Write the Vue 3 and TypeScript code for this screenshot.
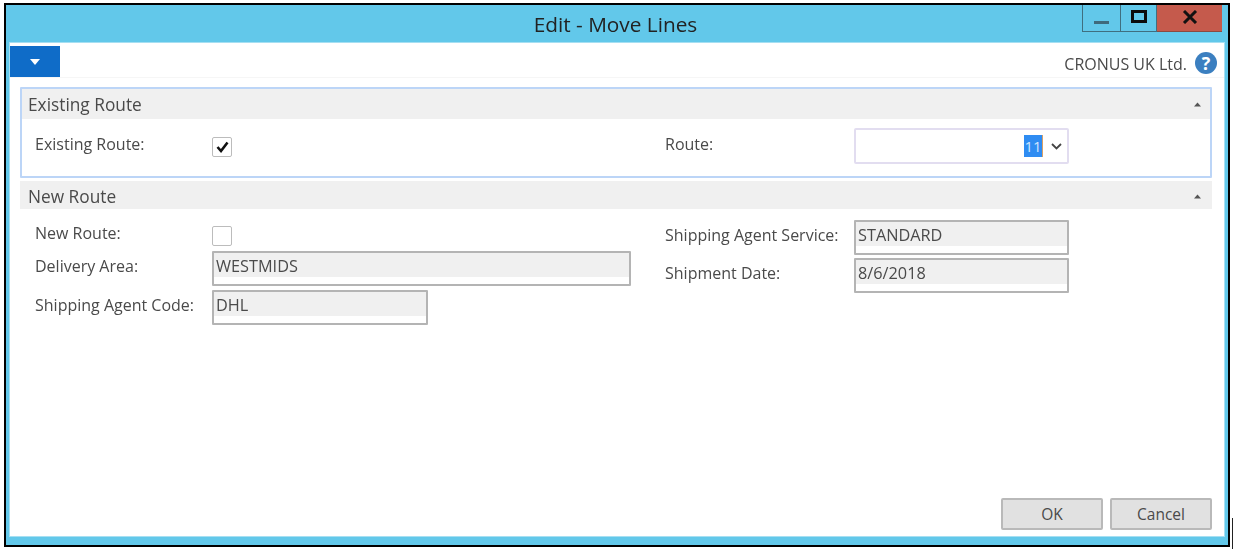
<template>
  <div class="page">
    <div class="window">
      <header class="titlebar">
        <span class="title">Edit - Move Lines</span>
        <div class="caption">
          <button class="cap cap-min" type="button"><span class="min-bar"></span></button>
          <button class="cap cap-max" type="button"><span class="max-box"></span></button>
          <button class="cap cap-close" type="button">
            <svg width="16" height="14" viewBox="0 0 16 14">
              <path d="M2 1l12 12M14 1L2 13" fill="none" stroke="#111" stroke-width="3" />
            </svg>
          </button>
        </div>
      </header>

      <div class="content">
        <div class="toolbar">
          <button class="menu-btn" type="button">
            <svg width="10" height="6" viewBox="0 0 10 6"><path d="M0 0h10L5 6z" fill="#fff" /></svg>
          </button>
          <div class="company">
            <span class="company-name">CRONUS UK Ltd.</span>
            <span class="help">?</span>
          </div>
        </div>

        <section class="panel panel-active">
          <div class="panel-head">
            <span>Existing Route</span>
            <svg class="collapse" width="7" height="5" viewBox="0 0 7 5"><path d="M0 4.500L3.500 0.500L7 4.500z" fill="#555" /></svg>
          </div>
          <div class="panel-body body-existing">
            <div class="row">
              <label>Existing Route:</label>
              <span class="check check-on">
                <svg width="13" height="12" viewBox="0 0 13 12">
                  <path d="M1.500 6L5 10l6.500-8.500" fill="none" stroke="#111" stroke-width="2.600" />
                </svg>
              </span>
            </div>
            <div class="row row-right">
              <label>Route:</label>
              <div class="route-input">
                <span class="sel">11</span>
                <svg class="chev" width="11" height="7" viewBox="0 0 11 7">
                  <path d="M1 1l4.500 4.500L10 1" fill="none" stroke="#444" stroke-width="1.800" />
                </svg>
              </div>
            </div>
          </div>
        </section>

        <section class="panel panel-new">
          <div class="panel-head">
            <span>New Route</span>
            <svg class="collapse" width="7" height="5" viewBox="0 0 7 5"><path d="M0 4.500L3.500 0.500L7 4.500z" fill="#555" /></svg>
          </div>
          <div class="panel-body body-new">
            <div class="col">
              <div class="row row-new">
                <label>New Route:</label>
                <span class="check"></span>
              </div>
              <div class="row row-field">
                <label>Delivery Area:</label>
                <div class="field field-wide"><span class="val">WESTMIDS</span></div>
              </div>
              <div class="row row-field">
                <label>Shipping Agent Code:</label>
                <div class="field field-short"><span class="val">DHL</span></div>
              </div>
            </div>
            <div class="col col-right">
              <div class="row row-field row-right">
                <label>Shipping Agent Service:</label>
                <div class="field field-right"><span class="val">STANDARD</span></div>
              </div>
              <div class="row row-field row-right">
                <label>Shipment Date:</label>
                <div class="field field-right"><span class="val">8/6/2018</span></div>
              </div>
            </div>
          </div>
        </section>

        <footer class="actions">
          <button class="btn btn-ok" type="button">OK</button>
          <button class="btn" type="button">Cancel</button>
        </footer>
      </div>
    </div>
    <i class="stray-line"></i>
  </div>
</template>

<script setup lang="ts">
</script>

<style>
html,
body {
  margin: 0;
  background: #fff;
}
</style>

<style scoped>
.page {
  position: relative;
  width: 1233px;
  height: 549px;
  padding: 3px 0 0 4px;
  box-sizing: border-box;
  overflow: hidden;
  font-family: "Open Sans", "Noto Sans", "Liberation Sans", sans-serif;
  color: #4a4a4a;
}

.window {
  width: 1226px;
  height: 544px;
  box-sizing: border-box;
  border: 2px solid #000;
  background: #62c8ea;
  padding: 0 4px 9px 4px;
  display: flex;
  flex-direction: column;
}

.titlebar {
  position: relative;
  height: 38px;
  flex: none;
  display: flex;
  align-items: center;
  justify-content: center;
}

.title {
  font-size: 20.800px;
  color: #222;
  margin-right: 3px;
  filter: blur(0.4px);
}

.caption {
  position: absolute;
  top: 0;
  right: 2px;
  display: flex;
  height: 27px;
}

.cap {
  margin: 0;
  padding: 0;
  border: 1px solid #3f6f80;
  border-top: none;
  background: #62c8ea;
  display: flex;
  align-items: center;
  justify-content: center;
}

.cap-min {
  width: 39px;
}

.cap-max {
  width: 36px;
  border-left: none;
}

.cap-close {
  width: 65px;
  background: #c55a4c;
  border: none;
  border-bottom: 1px solid #8c4a40;
}

.cap-close svg {
  margin-bottom: 3px;
}

.min-bar {
  width: 15px;
  height: 3px;
  background: #3f6a7c;
  margin-top: 9px;
}

.max-box {
  width: 10px;
  height: 7px;
  border: 3px solid #0c0c0c;
  margin-bottom: 4px;
}

.content {
  flex: 1;
  background: #fff;
  box-shadow: 0 0 0 1px #a6dff2;
  display: flex;
  flex-direction: column;
  padding: 0 12px 6px 10px;
  min-height: 0;
}

.toolbar {
  height: 35px;
  margin: 0 -12px 0 -10px;
  padding: 3px 7px 0 0;
  box-sizing: border-box;
  display: flex;
  align-items: flex-start;
  justify-content: space-between;
  border-bottom: 1px solid #f6f6f6;
  flex: none;
}

.menu-btn {
  width: 50px;
  height: 31px;
  margin: 0;
  padding: 0;
  border: none;
  background: #0f6cc8;
  display: flex;
  align-items: center;
  justify-content: center;
}

.company {
  display: flex;
  align-items: center;
  gap: 8px;
  height: 28px;
  margin-top: 3px;
  font-size: 16px;
}

.company-name {
  margin-top: 2px;
  filter: blur(0.4px);
}

.help {
  width: 22px;
  height: 22px;
  border-radius: 50%;
  background: #3b7fc0;
  color: #fff;
  font-weight: 700;
  font-size: 18px;
  line-height: 22px;
  text-align: center;
}

.panel {
  flex: none;
  box-sizing: border-box;
}

.panel-active {
  margin-top: 9px;
  height: 91px;
  border: 2px solid #bcd5f7;
  border-radius: 1px;
}

.panel-new {
  margin-top: 3px;
}

.panel-head {
  height: 28px;
  background: #f0f0f0;
  display: flex;
  align-items: center;
  justify-content: space-between;
  padding: 0 9px 0 6px;
  box-sizing: border-box;
  font-size: 17.300px;
}

.panel-head span {
  filter: blur(0.4px);
}

.panel-active .panel-head {
  height: 30px;
}

.panel-new .panel-head {
  padding: 2px 11px 0 8px;
}

.panel-body {
  display: grid;
  grid-template-columns: 630px 1fr;
}

.body-existing {
  padding-left: 13px;
}

.body-new {
  padding: 9px 0 0 15px;
}

.row {
  display: flex;
  align-items: center;
}

.row label {
  width: 177px;
  flex: none;
  font-size: 16px;
  filter: blur(0.4px);
}

.row-right label {
  width: 189px;
}

.body-existing .row {
  height: 54px;
}

.body-existing .row label {
  margin-bottom: 5px;
}

.check {
  width: 20px;
  height: 20px;
  box-sizing: border-box;
  border: 1px solid #bcbcbc;
  border-radius: 2px;
  background: #fff;
  display: flex;
  align-items: center;
  justify-content: center;
}

.check-on {
  margin-top: 2px;
}

.row-new {
  height: 33px;
}

.row-new label {
  margin-bottom: 3px;
}

.row-new .check {
  margin-top: 2px;
}

.row-field {
  height: 39px;
  align-items: flex-start;
}

.row-field label {
  margin-top: 4px;
}

.col-right {
  margin-top: 2px;
}

.col-right .row-field {
  height: 38px;
}

.field {
  box-sizing: border-box;
  height: 35px;
  border: 2px solid #b4b4b4;
  border-radius: 1px;
  background: #fff;
}

.val {
  display: block;
  height: 22px;
  background: #f0f0f0;
  padding: 2px 0 0 2px;
  font-size: 16.300px;
  line-height: 22px;
  color: #4a4a4a;
  filter: blur(0.4px);
}

.field-wide {
  width: 419px;
}

.field-short {
  width: 216px;
}

.field-right {
  width: 215px;
}

.route-input {
  width: 215px;
  height: 36px;
  box-sizing: border-box;
  border: 2px solid #e2ddf0;
  border-radius: 2px;
  background: #fff;
  display: flex;
  align-items: center;
  justify-content: flex-end;
  padding: 0 5px 0 0;
}

.sel {
  background: #2f8cf2;
  color: #cfe6ff;
  font-size: 15px;
  line-height: 22px;
  width: 18px;
  text-align: center;
  border-right: 1px solid #d9a066;
}

.chev {
  margin-left: 8px;
}

.actions {
  margin-top: auto;
  display: flex;
  justify-content: flex-end;
  gap: 7px;
}

.btn {
  width: 102px;
  height: 32px;
  margin: 0;
  padding: 0;
  box-sizing: border-box;
  border: 2px solid #b9b9b9;
  border-radius: 2px;
  background: #e1e1e1;
  font-family: inherit;
  font-size: 15.500px;
  color: #4a4a4a;
}

.stray-line {
  position: absolute;
  left: 1232px;
  top: 518px;
  width: 1px;
  height: 31px;
  background: #222;
}
</style>
